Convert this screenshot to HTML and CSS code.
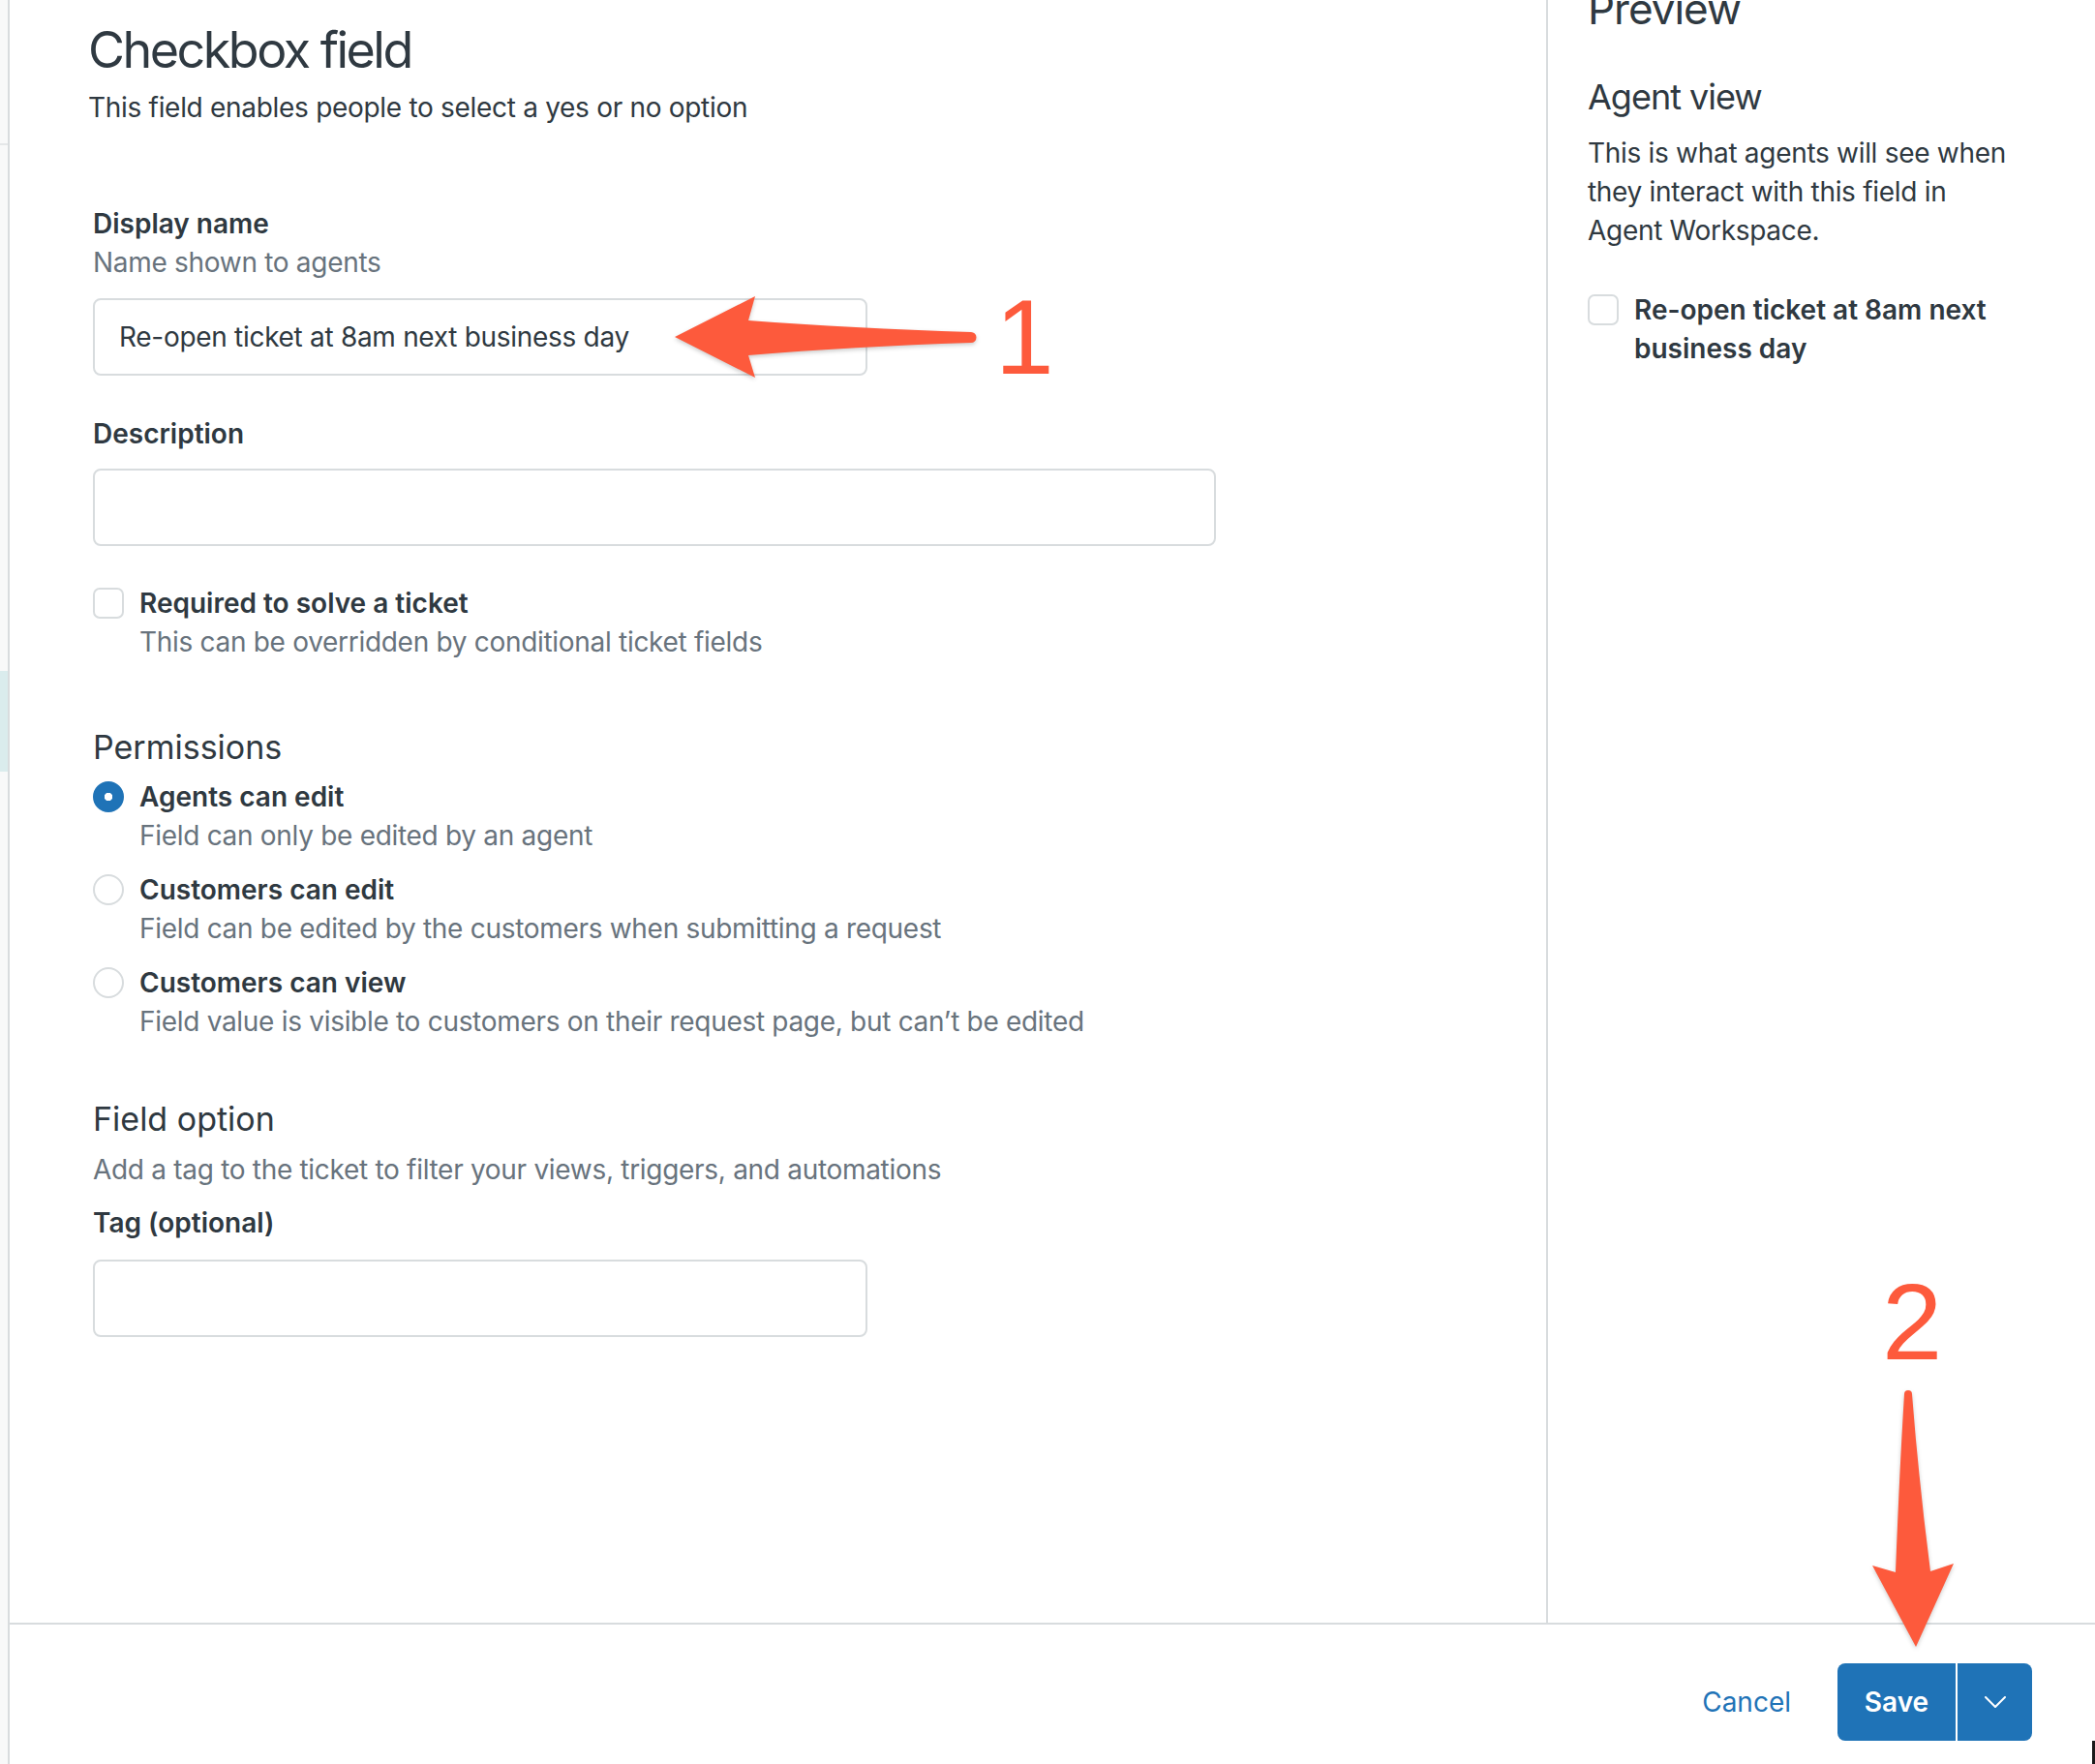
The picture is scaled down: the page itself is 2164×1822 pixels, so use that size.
FILE: index.html
```html
<!DOCTYPE html>
<html lang="en">
<head>
    <meta charset="UTF-8">
    <title>Checkbox field</title>
    <link rel="stylesheet" href="styles.css">
</head>
<body>
    <div class="screen">
        <!-- left nav rail, only its edge is visible -->
        <aside class="rail">
            <div class="rail-top"></div>
            <div class="rail-active"></div>
        </aside>

        <div class="workspace">
            <div class="panes">
                <main class="editor">
                    <header class="editor-head">
                        <h1>Checkbox field</h1>
                        <p>This field enables people to select a yes or no option</p>
                    </header>

                    <form class="form">
                        <div class="field">
                            <label class="label" for="displayName">Display name</label>
                            <div class="hint">Name shown to agents</div>
                            <input class="input input-short" id="displayName" type="text" value="Re-open ticket at 8am next business day">
                        </div>

                        <div class="field">
                            <label class="label" for="description">Description</label>
                            <input class="input input-wide" id="description" type="text">
                        </div>

                        <div class="choice choice-required">
                            <span class="box"></span>
                            <div>
                                <div class="label">Required to solve a ticket</div>
                                <div class="hint">This can be overridden by conditional ticket fields</div>
                            </div>
                        </div>

                        <h3 class="section-title section-permissions">Permissions</h3>
                        <div class="radios">
                            <div class="choice">
                                <span class="radio checked"></span>
                                <div>
                                    <div class="label">Agents can edit</div>
                                    <div class="hint">Field can only be edited by an agent</div>
                                </div>
                            </div>
                            <div class="choice">
                                <span class="radio"></span>
                                <div>
                                    <div class="label">Customers can edit</div>
                                    <div class="hint">Field can be edited by the customers when submitting a request</div>
                                </div>
                            </div>
                            <div class="choice">
                                <span class="radio"></span>
                                <div>
                                    <div class="label">Customers can view</div>
                                    <div class="hint">Field value is visible to customers on their request page, but can’t be edited</div>
                                </div>
                            </div>
                        </div>

                        <h3 class="section-title section-option">Field option</h3>
                        <div class="hint option-hint">Add a tag to the ticket to filter your views, triggers, and automations</div>
                        <div class="field field-tag">
                            <label class="label" for="tag">Tag (optional)</label>
                            <input class="input input-short" id="tag" type="text">
                        </div>
                    </form>
                </main>

                <section class="preview">
                    <h2 class="preview-title">Preview</h2>
                    <h3 class="preview-sub">Agent view</h3>
                    <p class="preview-text">This is what agents will see when they interact with this field in Agent Workspace.</p>
                    <div class="choice preview-choice">
                        <span class="box"></span>
                        <div class="label">Re-open ticket at 8am next business day</div>
                    </div>
                </section>
            </div>

            <footer class="footer">
                <button class="btn-cancel" type="button">Cancel</button>
                <div class="split-btn">
                    <button class="btn-save" type="button">Save</button>
                    <button class="btn-menu" type="button" aria-label="More options">
                        <svg width="22" height="12" viewBox="0 0 22 12"><polyline points="1,1 11,11 21,1" fill="none" stroke="#fff" stroke-width="2" stroke-linecap="round" stroke-linejoin="round"/></svg>
                    </button>
                </div>
            </footer>
        </div>

        <!-- hand drawn annotations on top of the screenshot -->
        <svg class="notes" width="2164" height="1822" viewBox="0 0 2164 1822">
            <g fill="#fd5a3c" class="note-arrows">
                <path d="M697,348 L780,306 L773,331 Q880,339 1003,343 A5.5,5.5 0 0 1 1003,354 Q880,358 773,367 L780,390 Z"/>
                <path d="M1979,1701 L1934,1617 L1958,1624 Q1962,1520 1967,1440 A4,4 0 0 1 1975,1440 Q1982,1530 1994,1623 L2018,1615 Z"/>
            </g>
            <text class="note-num" x="1028" y="386">1</text>
            <text class="note-num note-two" x="1944" y="1404">2</text>
        </svg>
        <span class="cursor"></span>
    </div>
</body>
</html>
```

FILE: styles.css
```css
body {
    margin: 0;
    background-color: #fff;
    color: #2f3941;
    font-family: Inter, "Noto Sans", sans-serif;
    font-size: 28px;
    line-height: 40px;
    letter-spacing: -0.3px;
}

.screen {
    position: relative;
    display: flex;
    height: 1822px;
    overflow: hidden;
}

/* left rail edge */
.rail {
    width: 8px;
    flex-shrink: 0;
    background-color: #f8f9f9;
    border-right: 2px solid #d8dcde;
}

.rail-top {
    height: 148px;
    border-bottom: 2px solid #e4e7e8;
}

.rail-active {
    margin-top: 543px;
    height: 104px;
    background-color: #daeced;
}

.workspace {
    flex: 1;
    display: flex;
    flex-direction: column;
}

.panes {
    flex: 1;
    display: flex;
}

.editor {
    width: 1587px;
    flex-shrink: 0;
    border-right: 2px solid #d8dcde;
}

.editor-head {
    padding: 20px 0 0 81px;
}

.editor-head h1 {
    margin: 0;
    font-size: 52px;
    line-height: 64px;
    font-weight: 400;
    letter-spacing: -2.5px;
}

.editor-head p {
    margin: 7px 0 0;
}

.form {
    margin-top: 80px;
    padding-left: 86px;
}

.field + .field {
    margin-top: 40px;
}

.label {
    display: block;
    font-weight: 600;
    letter-spacing: 0;
}

.hint {
    color: #68737d;
}

.input {
    display: block;
    box-sizing: border-box;
    height: 80px;
    margin-top: 16px;
    padding: 0 25px;
    border: 2px solid #d8dcde;
    border-radius: 8px;
    font-family: inherit;
    font-size: 28px;
    letter-spacing: -0.3px;
    color: #2f3941;
    background-color: #fff;
    outline: none;
}

.field .hint + .input {
    margin-top: 17px;
}

.input-short {
    width: 800px;
}

.input-wide {
    width: 1160px;
}

/* checkbox / radio rows */
.choice {
    display: grid;
    grid-template-columns: 32px 1fr;
    column-gap: 16px;
    align-items: start;
}

.choice-required {
    margin-top: 39px;
}

.box,
.radio {
    box-sizing: border-box;
    width: 32px;
    height: 32px;
    margin-top: 4px;
    border: 2px solid #d8dcde;
    background-color: #fff;
}

.box {
    border-radius: 7px;
}

.radio {
    border-radius: 50%;
}

.radio.checked {
    border-color: #1f73b7;
    background-color: #1f73b7;
    background-image: radial-gradient(circle, #fff 0, #fff 4px, transparent 4.5px);
}

.section-title {
    margin: 0;
    font-size: 34px;
    line-height: 40px;
    font-weight: 400;
    letter-spacing: 0;
}

.section-permissions {
    margin-top: 69px;
}

.radios {
    margin-top: 11px;
    display: flex;
    flex-direction: column;
    gap: 16px;
}

.section-option {
    margin-top: 61px;
}

.option-hint {
    margin-top: 12px;
}

.field-tag {
    margin-top: 15px;
}

.field-tag .input {
    margin-top: 18px;
}

/* preview column */
.preview {
    flex: 1;
    padding: 0 84px 0 41px;
}

.preview-title {
    margin: -19px 0 0;
    font-size: 44px;
    line-height: 56px;
    font-weight: 400;
    letter-spacing: -1px;
}

.preview-sub {
    margin: 41px 0 0;
    font-size: 36px;
    line-height: 44px;
    font-weight: 400;
    letter-spacing: -1px;
}

.preview-text {
    margin: 16px 0 0;
}

.preview-choice {
    margin-top: 42px;
}

/* bottom bar */
.footer {
    box-sizing: border-box;
    height: 146px;
    flex-shrink: 0;
    border-top: 2px solid #d8dcde;
    display: flex;
    justify-content: flex-end;
    align-items: flex-start;
    padding: 40px 65px 0 0;
}

.btn-cancel {
    height: 80px;
    margin-right: 48px;
    padding: 0;
    border: none;
    background: none;
    font-family: inherit;
    font-size: 28px;
    color: #1f73b7;
    cursor: pointer;
}

.split-btn {
    display: flex;
    gap: 2px;
}

.btn-save,
.btn-menu {
    height: 80px;
    border: none;
    background-color: #1f73b7;
    color: #fff;
    font-family: inherit;
    font-size: 28px;
    font-weight: 600;
    cursor: pointer;
}

.btn-save {
    width: 122px;
    border-radius: 8px 0 0 8px;
}

.btn-menu {
    width: 77px;
    border-radius: 0 8px 8px 0;
    display: flex;
    align-items: center;
    justify-content: center;
}

/* annotation layer */
.notes {
    position: absolute;
    left: 0;
    top: 0;
    pointer-events: none;
}

.note-arrows {
    filter: drop-shadow(0 2px 2px rgba(0, 0, 0, 0.2));
}

.note-num {
    font-family: "Liberation Sans", Arial, sans-serif;
    font-size: 109px;
    fill: #fd5a3c;
}

.note-two {
    font-size: 112px;
}

.cursor {
    position: absolute;
    left: 2160px;
    top: 1798px;
    width: 3px;
    height: 24px;
    background-color: #1a1a1a;
    border-left: 1px solid #fff;
}
```
